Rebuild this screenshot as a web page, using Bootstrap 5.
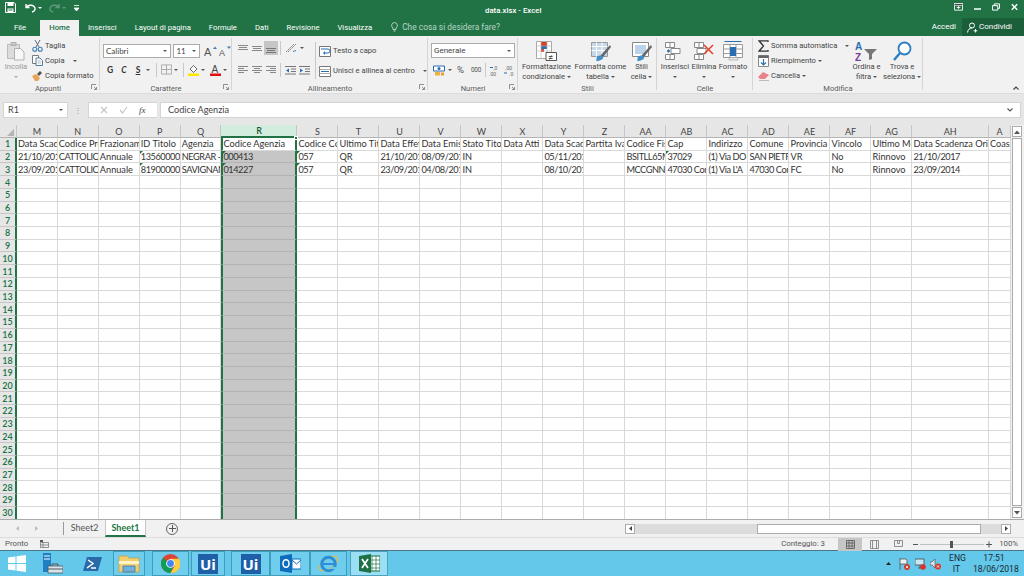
<!DOCTYPE html>
<html lang="it">
<head>
<meta charset="utf-8">
<title>data.xlsx - Excel</title>
<link href="https://cdn.jsdelivr.net/npm/bootstrap@5.3.0/dist/css/bootstrap.min.css" rel="stylesheet">
<style>
html,body{height:576px;overflow:hidden}
body{width:1024px;background:#f1f1f1;font-family:Roboto,"Open Sans",sans-serif;font-size:7.6px;color:#444;line-height:10px}
svg{display:block;flex:none}
.l1{margin-left:1px}.l2{margin-left:2px}.l3{margin-left:3px}.l4{margin-left:4px}.l5{margin-left:5px}.l6{margin-left:6px}.l7{margin-left:7px}.l8{margin-left:8px}.l9{margin-left:9px}.l11{margin-left:11px}
.w10{width:10px}.w14{width:14px}.w27{width:27px}.w28{width:28px}.w30{width:30px}.w31{width:31px}.w32{width:32px}.w33{width:33px}.w34{width:34px}.w37{width:37px}.w38{width:38px}.w39{width:39px}.w40{width:40px}.w41{width:41px}.w53{width:53px}.w55{width:55px}.w70{width:70px}.w84{width:84px}.w93{width:93px}
.xl-title{height:18px;background:#217346;color:#fff}
.xl-qat{width:485px;padding:2px 0 0 5px}
.xl-ttl{margin-top:6px;font-size:7.8px;font-weight:500}
.xl-win{padding:3px 6px 0 0;margin-left:auto}
.xl-tabs{height:18px;background:#217346;color:#fff;font-size:7.7px}
.xl-tab{padding:0 9px;height:16px;display:flex;align-items:center;margin-top:2px}
.xl-file{width:40px;justify-content:center;padding:0}
.xl-home{width:39px;justify-content:center;padding:0;background:#f1f1f1;color:#217346;font-weight:500}
.xl-tell{margin-left:10px;gap:4px;color:#b8d5c5;font-size:8.4px}
.xl-acc{font-size:8px}
.xl-share{width:62px;height:18px;background:#1b5e3a;gap:1px;padding-left:5px;margin-left:6px;font-size:8px}
.xl-ribbon{height:58px;background:#f1f1f1;border-bottom:1px solid #dcdcdc}
.xl-grp{display:flex;flex-direction:column;flex:none;padding-top:2px;position:relative}
.xl-grp::after{content:"";position:absolute;right:0;top:2px;bottom:3px;width:1px;background:#d4d4d4}
.xl-body{height:47px;display:flex}
.xl-lab{height:9px;text-align:center;line-height:9px;color:#5c5c5c}
.xl-launch{position:absolute;right:3px;bottom:3px;width:6px;height:6px}
.g-1{width:100px}.g-2{width:132px}.g-3{width:196px}.g-4{width:90px}.g-5{width:139px}.g-6{width:96px}.g-7{width:170px}
.xl-row{display:flex;align-items:center;white-space:nowrap}
.xl-sm{height:15px;gap:2px}
.xl-big{display:flex;flex-direction:column;align-items:center;text-align:center;white-space:nowrap;flex:none}
.xl-ic{height:24px;padding-top:3px;display:flex;justify-content:center}
.xl-dd{height:10px;display:flex;align-items:center}
.xl-drop{display:inline-block;width:0;height:0;border-top:2px solid #555;border-left:2px solid transparent;border-right:2px solid transparent;vertical-align:middle;flex:none}
.xl-dw{border-top-color:#fff}.xl-dg{border-top-color:#5c9a7a}.xl-dl{border-top-color:#aaa}
.xl-muted{color:#9a9a9a}
.xl-sel{height:14px;background:#fff;border:1px solid #ababab;display:flex;align-items:center;justify-content:space-between;padding:0 3px 0 2px;font-size:8px}
.xl-cal{font-family:Lato,sans-serif}
.xl-vs{width:1px;height:14px;background:#c8c8c8;flex:none}
.xl-on{background:#c6c6c6}
.xl-fbar{height:31px;background:#e6e6e6;padding:8px 0 7px 3px}
.xl-fbar>*{height:16px;background:#fff;border:1px solid #d4d4d4;display:flex;align-items:center;font-family:Lato,sans-serif}
.xl-fbox{width:65px;justify-content:space-between;padding:0 4px;font-size:9px}
.xl-fdots{width:20px;background:transparent!important;border:0!important;color:#9a9a9a;justify-content:center}
.xl-fx{width:69px;justify-content:space-around;padding:0 6px;margin-right:3px;border-right:0}
.xl-fxt{font:italic 9px "Liberation Serif",serif;color:#444}
.xl-inp{width:861px;font-size:9.1px;padding:0 7px;justify-content:space-between}
.xl-main{height:394px;background:#fff}
.xl-gridwrap{width:1011px;height:394px;overflow:hidden}
.xl-sheet{table-layout:fixed;width:1011px;border-collapse:separate;border-spacing:0;font-family:Lato,sans-serif;font-size:9.2px;color:#333}
.c-h{width:17px}.c-a{width:40.8px}.c-b{width:41px}.c-c{width:40.7px}.c-r{width:76px}.c-ah{width:76.5px}
.xl-sheet th,.xl-sheet td{height:12.72px;padding:0 0 0 1px;line-height:11px;border-right:1px solid #d9d9d9;border-bottom:1px solid #d9d9d9;overflow:hidden;white-space:nowrap;font-weight:400}
.xl-sheet td.xl-n{letter-spacing:-.45px}
.xl-sheet thead th{height:12px;background:#e6e6e6;text-align:center;color:#444;border-right-color:#c6c6c6;border-bottom-color:#b4b4b4;font-size:9px;padding:0}
.xl-sheet tbody th{background:#e6e6e6;text-align:center;color:#217346;border-right:2px solid #217346;border-bottom-color:#c6c6c6;padding:0;font-weight:600;font-size:9px}
.xl-sheet thead th.xl-c{background:#d2ecdd;color:#185c37;border-bottom:2px solid #217346;font-weight:600}
.xl-sheet td.xl-s{background:#c6c6c6;border-left:2px solid #217346;border-right:2px solid #217346;border-bottom-color:#b2b2b2;padding-left:0}
.xl-sheet td.xl-s1{background:#fff;position:relative;overflow:visible;border-bottom-color:#d9d9d9}
.xl-sheet td.xl-t{position:relative}
.xl-sheet td.xl-t::before{content:"";position:absolute;left:0;top:0;border-top:3px solid #217346;border-right:3px solid transparent}
.xl-handle{position:absolute;right:-3px;top:-2px;width:4px;height:4px;background:#217346;border:1px solid #fff}
.xl-corner{border-left:7px solid transparent;border-bottom:7px solid #b4b4b4;width:0;height:0;margin:3px 2px 0 auto}
.xl-vbar{width:13px;background:#f1f1f1;padding:1px 0 1px 1px}
.xl-sb{width:10px;height:11px;background:#fff;border:1px solid #ababab;display:flex;align-items:center;justify-content:center;flex:none}
.xl-vtrack{width:10px;flex:1;background:#fff;border:1px solid #ababab;margin:1px 0}
.xl-sheets{height:18px;background:#f1f1f1;border-top:1px solid #ababab;font-size:8.5px;color:#555}
.xl-nav{width:64px;gap:14px;padding-left:16px;border-right:1px solid #9a9a9a;height:13px}
.xl-stab{width:41px;height:17px;display:flex;align-items:center;justify-content:center;font-family:Lato,sans-serif;font-size:9px;margin-top:-1px}
.xl-act{background:#fff;color:#217346;font-weight:700;border-bottom:2px solid #217346;border-left:1px solid #c6c6c6;border-right:1px solid #c6c6c6;margin-bottom:-1px}
.xl-add{width:12px;height:12px;border:1px solid #666;border-radius:50%;margin-left:20px;display:flex;align-items:center;justify-content:center}
.xl-hbar{margin-left:auto;width:399px;padding-right:13px;height:16px}
.xl-hb{width:10px;height:10px;background:#fff;border:1px solid #ababab;display:flex;align-items:center;justify-content:center;flex:none}
.xl-htrack{flex:1;height:10px;background:#dcdcdc;padding-left:122px;padding-right:20px}
.xl-thumb{height:10px;background:#fff;border:1px solid #ababab}
.xl-status{height:13px;background:#f1f1f1;padding-left:5px;border-top:1px solid #dcdcdc;font-size:7.8px;color:#555}
.xl-pronto{width:35px}
.xl-cnt{margin-left:auto;margin-right:13px}
.xl-pct{width:24px;text-align:right;margin-right:6px}
.xl-view{width:24px;height:13px;display:flex;align-items:center;justify-content:center}
.xl-taskbar{height:26px;background:#63c8ea;border-top:1px solid #48788a;color:#1a2a33;font-size:8.6px;line-height:11px}
.xl-ti{height:25px;display:flex;align-items:center;justify-content:center;flex:none}
.xl-box{border:1px solid #3e9dbc;background:#6fcded}
.xl-on-task{background:#9adff5;border-color:#4aa2bf}
.xl-ui{width:20px;height:20px;background:#1f5fa8;color:#fff;font:700 15px/20px "Open Sans",sans-serif;text-align:center}
.xl-tray{margin-left:auto;gap:4.5px;padding-right:9px}
.xl-eng{margin-left:3.5px;text-align:center;width:15px}
.xl-clock{text-align:center;width:42px;margin-left:4.5px}
.xl-b{width:14px;text-align:center;font:700 8.5px Lato,sans-serif;color:#333}
.xl-i{font-style:italic}.xl-u{text-decoration:underline}
.r-2{margin-top:5px;height:13px}
.a-1{padding:6px 0 0 3px}
.a-l{padding:3px 0 0 4px;width:83px;flex:none}
.a-r{height:14px}.a-r2{height:14px;margin-top:8px}
.a-c{width:14px;display:flex;justify-content:center}
.a-on{height:14px;align-items:flex-end;padding-bottom:2px}
.a-v{margin:0 4px 0 2px}
.a-v2{height:37px;margin:4px 3px 0 0}
.a-t{padding-top:3px;flex:none}
.a-w{height:20px;gap:2px}
.n-b{padding:5px 3px 0 3px}
.n-s{height:15px}
.n-r{margin-top:5px;height:14px;padding-left:2px}
.n-p{margin-left:5px;font-size:9.5px;width:11px;color:#555}
.n-k{margin-left:3px;font-size:6.5px;letter-spacing:-.3px;color:#555}
.n-v{margin:0 3px 0 4px}
.b-2{padding-left:2px}.b-3{padding-left:3px}.b-5{padding-left:5px}
.xl-end{padding:0 5px 3px 0}
.xl-lp{padding-right:4px}
</style>
</head>
<body>
<!-- title bar -->
<div class="xl-title d-flex align-items-start">
  <div class="xl-qat d-flex align-items-center">
    <svg width="11" height="11" viewBox="0 0 11 11"><path d="M.5.5h8.5l1.500 1.500v8.500H.5z" fill="none" stroke="#fff"/><path d="M2.500 1h6v3h-6zM2.500 6.500h6V10h-6z" fill="#fff"/><path d="M3.500 7.500h4v1h-4z" fill="#217346"/></svg>
    <svg width="11" height="10" viewBox="0 0 11 10" class="l9"><path d="M1 1v3.500h3.500M1.500 4C3 2 7 1.500 9 3.500s1 5-2 5.500" fill="none" stroke="#fff" stroke-width="1.400"/></svg>
    <span class="xl-drop xl-dw l2"></span>
    <svg width="11" height="10" viewBox="0 0 11 10" class="l7"><path d="M10 1v3.500H6.500M9.500 4C8 2 4 1.500 2 3.500s-1 5 2 5.500" fill="none" stroke="#5c9a7a" stroke-width="1.400"/></svg>
    <span class="xl-drop xl-dg l2"></span>
    <svg width="5" height="6" viewBox="0 0 5 6" class="l8"><path d="M0 .5h5M0 3h5L2.500 6z" stroke="#fff" fill="#fff" stroke-width=".8"/></svg>
  </div>
  <div class="xl-ttl">data.xlsx - Excel</div>
  <div class="xl-win d-flex align-items-center">
    <svg width="9" height="8" viewBox="0 0 10 8"><path d="M.5.500h9v7h-9z" fill="none" stroke="#fff"/><path d="M0 0h10v2H0zM3 4.500h4M5 3v3" stroke="#fff"/></svg>
    <svg width="7" height="8" viewBox="0 0 7 8" class="l11"><path d="M0 6h7" stroke="#fff" stroke-width="1.500"/></svg>
    <svg width="8" height="8" viewBox="0 0 9 8" class="l11"><path d="M.5 2.500h6v5h-6zM2.500 2.500V.500h6v5h-2" fill="none" stroke="#fff" stroke-width="1.100"/></svg>
    <svg width="7" height="8" viewBox="0 0 9 9" class="l11"><path d="M1 1l7 7M8 1L1 8" stroke="#fff" stroke-width="1.800"/></svg>
  </div>
</div>
<!-- tabs -->
<div class="xl-tabs d-flex">
  <div class="xl-tab xl-file">File</div>
  <div class="xl-tab xl-home">Home</div>
  <div class="xl-tab">Inserisci</div>
  <div class="xl-tab">Layout di pagina</div>
  <div class="xl-tab">Formule</div>
  <div class="xl-tab">Dati</div>
  <div class="xl-tab">Revisione</div>
  <div class="xl-tab">Visualizza</div>
  <div class="d-flex align-items-center xl-tell">
    <svg width="7" height="10" viewBox="0 0 7 10"><path d="M3.500.500a3 3 0 0 1 1.500 5.500v1.500H2V6A3 3 0 0 1 3.500.500zM2.500 9h2" fill="none" stroke="#d5e6dc" stroke-width=".8"/></svg>
    <span>Che cosa si desidera fare?</span>
  </div>
  <div class="ms-auto d-flex align-items-center xl-acc">Accedi</div>
  <div class="xl-share d-flex align-items-center">
    <svg width="11" height="11" viewBox="0 0 11 11"><circle cx="5" cy="3.500" r="2.500" fill="none" stroke="#fff"/><path d="M.5 10.500c.5-3 2-4.500 4.500-4.500M8.500 7v3.500M6.700 8.800h3.600" fill="none" stroke="#fff"/></svg>
    <span>Condividi</span>
  </div>
</div>
<!-- ribbon -->
<div class="xl-ribbon d-flex">
  <!-- Appunti -->
  <div class="xl-grp g-1">
    <div class="xl-body">
      <div class="xl-big w32">
        <div class="xl-ic"><svg width="20" height="20" viewBox="0 0 20 20"><path d="M1.500 3.500h12v14h-12z" fill="#dcdcdc" stroke="#bcbcbc"/><path d="M5 1.500h5v3H5z" fill="#c8c8c8" stroke="#b0b0b0"/><path d="M8.500 7.500h6l3.500 3.500v8h-9.500z" fill="#f8f8f8" stroke="#b0b0b0"/></svg></div>
        <div class="xl-muted">Incolla</div>
        <div class="xl-dd"><span class="xl-drop xl-dl"></span></div>
      </div>
      <div>
        <div class="xl-row xl-sm"><svg width="11" height="12" viewBox="0 0 11 12"><path d="M3 0l4 7M8 0L4 7" stroke="#5a6a7a" fill="none"/><circle cx="2.800" cy="9.300" r="2" fill="none" stroke="#3f7fb5" stroke-width="1.100"/><circle cx="8.200" cy="9.300" r="2" fill="none" stroke="#3f7fb5" stroke-width="1.100"/></svg><span>Taglia</span></div>
        <div class="xl-row xl-sm"><svg width="11" height="11" viewBox="0 0 11 11"><path d="M.5.500h6v8h-6z" fill="#fff" stroke="#7a7a7a"/><path d="M4 3h4l2.500 2.500V10.500H4z" fill="#fff" stroke="#4a7fae"/><path d="M5.500 6h3.500M5.500 8h3.500" stroke="#999" stroke-width=".7"/></svg><span>Copia</span><span class="xl-drop l6"></span></div>
        <div class="xl-row xl-sm"><svg width="11" height="11" viewBox="0 0 11 11"><path d="M0 6l4-2 4 4-2 3H3z" fill="#e8a55a"/><path d="M5 4l3-3 2 2-3 3z" fill="#555"/></svg><span>Copia formato</span></div>
      </div>
    </div>
    <div class="xl-lab xl-lp">Appunti</div>
    <svg class="xl-launch" viewBox="0 0 6 6"><path d="M.5 5V.500H5M3 3l2.500 2.500M5.500 3v2.500H3" fill="none" stroke="#777" stroke-width=".8"/></svg>
  </div>
  <!-- Carattere -->
  <div class="xl-grp g-2">
    <div class="xl-body flex-column a-1">
      <div class="xl-row">
        <div class="xl-sel w70"><span class="xl-cal">Calibri</span><span class="xl-drop"></span></div>
        <div class="xl-sel w27 l2"><span class="xl-cal">11</span><span class="xl-drop"></span></div>
        <svg width="13" height="11" viewBox="0 0 13 11" class="l4"><text x="0" y="10" font-size="11" font-family="Liberation Sans" fill="#555">A</text><path d="M9 3l2-2.500L13 3z" fill="#3f7fb5"/></svg>
        <svg width="13" height="11" viewBox="0 0 13 11" class="l2"><text x="0" y="10" font-size="9" font-family="Liberation Sans" fill="#555">A</text><path d="M8 .500l2 2.500 2-2.500z" fill="#3f7fb5"/></svg>
      </div>
      <div class="xl-row r-2">
        <b class="xl-b">G</b>
        <b class="xl-b xl-i">C</b>
        <b class="xl-b xl-u">S</b>
        <span class="xl-drop l1"></span>
        <span class="xl-vs l6"></span>
        <svg width="11" height="11" viewBox="0 0 12 11" class="l4"><path d="M.5.500h11v10H.500zM6 .5v10M.5 5.500h11" fill="none" stroke="#a8a8a8"/></svg>
        <span class="xl-drop l2"></span>
        <span class="xl-vs l5"></span>
        <svg width="11" height="12" viewBox="0 0 11 12" class="l4"><path d="M2 5l3.500-3.500L9 5 5.500 8.500z" fill="#fff" stroke="#666"/><path d="M0 9.500h11V12H0z" fill="#ffe600"/></svg>
        <span class="xl-drop l2"></span>
        <svg width="11" height="12" viewBox="0 0 11 12" class="l5"><text x="1.500" y="9" font-size="10" font-family="Liberation Sans" fill="#444">A</text><path d="M0 9.500h11V12H0z" fill="#e01010"/></svg>
        <span class="xl-drop l2"></span>
      </div>
    </div>
    <div class="xl-lab">Carattere</div>
    <svg class="xl-launch" viewBox="0 0 6 6"><path d="M.5 5V.500H5M3 3l2.500 2.500M5.500 3v2.500H3" fill="none" stroke="#777" stroke-width=".8"/></svg>
  </div>
  <!-- Allineamento -->
  <div class="xl-grp g-3">
    <div class="xl-body">
      <div class="a-l">
        <div class="xl-row a-r">
          <div class="a-c"><svg width="10" height="7" viewBox="0 0 10 7"><path d="M0 .5h10M1 2.500h8M0 4.500h10" stroke="#888"/></svg></div>
          <div class="a-c"><svg width="10" height="7" viewBox="0 0 10 7"><path d="M0 1.500h10M1 3.500h8M0 5.500h10" stroke="#888"/></svg></div>
          <div class="a-c a-on xl-on"><svg width="10" height="7" viewBox="0 0 10 7"><path d="M0 2.500h10M1 4.500h8M0 6.500h10" stroke="#777"/></svg></div>
          <span class="xl-vs a-v"></span>
          <svg width="12" height="10" viewBox="0 0 12 10"><path d="M1 9l8-8M3 9l8-8" stroke="#777" stroke-dasharray="2 1"/><path d="M8 8.500l3-1" stroke="#3f7fb5"/></svg>
          <span class="xl-drop l3"></span>
        </div>
        <div class="xl-row a-r2">
          <div class="a-c"><svg width="10" height="8" viewBox="0 0 10 8"><path d="M0 .5h10M0 2.500h6M0 4.500h10M0 6.500h6" stroke="#888"/></svg></div>
          <div class="a-c"><svg width="10" height="8" viewBox="0 0 10 8"><path d="M0 .5h10M2 2.500h6M0 4.500h10M2 6.500h6" stroke="#888"/></svg></div>
          <div class="a-c"><svg width="10" height="8" viewBox="0 0 10 8"><path d="M0 .5h10M4 2.500h6M0 4.500h10M4 6.500h6" stroke="#888"/></svg></div>
          <span class="xl-vs a-v"></span>
          <svg width="11" height="9" viewBox="0 0 11 9"><path d="M0 .5h11M6 3h5M6 5.500h5M0 8h11" stroke="#777"/><path d="M4 2.500L1 4.500l3 2z" fill="#2a6db0"/></svg>
          <svg width="11" height="9" viewBox="0 0 11 9" class="l3"><path d="M0 .5h11M6 3h5M6 5.500h5M0 8h11" stroke="#777"/><path d="M1 2.500l3 2-3 2z" fill="#2a6db0"/></svg>
        </div>
      </div>
      <div class="xl-vs a-v2"></div>
      <div class="a-t">
        <div class="xl-row a-w"><svg width="12" height="11" viewBox="0 0 12 11"><path d="M.5.500h11v10H.500z" fill="#fff" stroke="#777"/><path d="M2 3h7a1.500 1.500 0 0 1 0 4H5" fill="none" stroke="#2a6db0"/><path d="M6 5L4 7l2 2z" fill="#2a6db0"/></svg><span>Testo a capo</span></div>
        <div class="xl-row a-w"><svg width="12" height="11" viewBox="0 0 12 11"><path d="M.5.500h11v10H.500z" fill="#fff" stroke="#777"/><path d="M.5 3.500h11M.5 7.500h11" stroke="#aaa"/><path d="M2 5.500h8" stroke="#2a6db0"/></svg><span>Unisci e allinea al centro</span><span class="xl-drop l6"></span></div>
      </div>
    </div>
    <div class="xl-lab">Allineamento</div>
    <svg class="xl-launch" viewBox="0 0 6 6"><path d="M.5 5V.500H5M3 3l2.500 2.500M5.500 3v2.500H3" fill="none" stroke="#777" stroke-width=".8"/></svg>
  </div>
  <!-- Numeri -->
  <div class="xl-grp g-4">
    <div class="xl-body flex-column n-b">
      <div class="xl-sel n-s w84"><span>Generale</span><span class="xl-drop"></span></div>
      <div class="xl-row n-r">
        <svg width="12" height="11" viewBox="0 0 12 11"><path d="M.5 1h11v5H.500z" fill="#fff" stroke="#2a6db0"/><circle cx="6" cy="3.500" r="1.500" fill="#2a6db0"/><path d="M2 7h5v3.500H2z" fill="#f0b040"/><path d="M8 7.500h3v3H8z" fill="#e8a030"/></svg>
        <span class="xl-drop l3"></span>
        <span class="n-p">%</span>
        <span class="n-k">000</span>
        <span class="xl-vs n-v"></span>
        <svg width="11" height="11" viewBox="0 0 11 11"><text x="4" y="5" font-size="5" font-family="Liberation Sans" fill="#555">,0</text><text x="0" y="10.500" font-size="5" font-family="Liberation Sans" fill="#555">,00</text><path d="M1 2.500h3" stroke="#2a6db0"/></svg>
        <svg width="11" height="11" viewBox="0 0 11 11" class="l4"><text x="1" y="5" font-size="5" font-family="Liberation Sans" fill="#555">,00</text><text x="5" y="10.500" font-size="5" font-family="Liberation Sans" fill="#555">,0</text><path d="M0 8h3" stroke="#2a6db0"/></svg>
      </div>
    </div>
    <div class="xl-lab">Numeri</div>
    <svg class="xl-launch" viewBox="0 0 6 6"><path d="M.5 5V.500H5M3 3l2.500 2.500M5.500 3v2.500H3" fill="none" stroke="#777" stroke-width=".8"/></svg>
  </div>
  <!-- Stili -->
  <div class="xl-grp g-5">
    <div class="xl-body b-2">
      <div class="xl-big w53">
        <div class="xl-ic"><svg width="21" height="21" viewBox="0 0 21 21"><path d="M.5.500h15v17H.5z" fill="#fff" stroke="#aaa"/><path d="M5 1h6v4H5z" fill="#d9402a"/><path d="M5 5h6v3H5z" fill="#2a6db0"/><path d="M5 8h3v3H5z" fill="#d9402a"/><path d="M.5 5h15M.5 10h15M5 .5v17M11 .5v17" stroke="#bbb" fill="none" stroke-width=".6"/><path d="M10 11.500h10.500v8H10z" fill="#fff" stroke="#555"/><text x="12.500" y="18.500" font-size="8" fill="#333" font-family="Liberation Sans">≠</text></svg></div>
        <div>Formattazione</div>
        <div>condizionale <span class="xl-drop"></span></div>
      </div>
      <div class="xl-big w55">
        <div class="xl-ic"><svg width="20" height="21" viewBox="0 0 20 21"><path d="M.5 1.500h16v14H.500z" fill="#c6d8ea" stroke="#999"/><path d="M.5 5.500h16M.5 9.500h16M5.500 1.500v14M11 1.500v14" stroke="#fff"/><path d="M19 4L10 14l-1 3 3-1 8-10z" fill="#666"/><path d="M6 16c2-2 5-2 6 0s-3 4-7 4c1-1 0-2 1-4z" fill="#3f8fc8"/></svg></div>
        <div>Formatta come</div>
        <div>tabella <span class="xl-drop"></span></div>
      </div>
      <div class="xl-big w27">
        <div class="xl-ic"><svg width="20" height="21" viewBox="0 0 20 21"><path d="M.5 1.500h16v14H.500z" fill="#fff" stroke="#888"/><path d="M3 4h11v9H3z" fill="#bcd2e8"/><path d="M19 4L10 14l-1 3 3-1 8-10z" fill="#666"/><path d="M6 16c2-2 5-2 6 0s-3 4-7 4c1-1 0-2 1-4z" fill="#3f8fc8"/></svg></div>
        <div>Stili</div>
        <div>cella <span class="xl-drop"></span></div>
      </div>
    </div>
    <div class="xl-lab">Stili</div>
  </div>
  <!-- Celle -->
  <div class="xl-grp g-6">
    <div class="xl-body b-3">
      <div class="xl-big w30">
        <div class="xl-ic"><svg width="20" height="20" viewBox="0 0 20 20"><path d="M.5 1.500h9v5h-9zM6 7.500h9v5H6zM.5 13.500h9v5h-9zM5 1.500v5M5 13.500v5" fill="#fff" stroke="#888"/><path d="M2 10h3M3.500 8.500v3" stroke="#2a6db0" stroke-width="1.400"/></svg></div>
        <div>Inserisci</div>
        <div class="xl-dd"><span class="xl-drop"></span></div>
      </div>
      <div class="xl-big w28">
        <div class="xl-ic"><svg width="20" height="20" viewBox="0 0 20 20"><path d="M.5 1.500h9v5h-9zM3 7.500h9v5H3zM.5 13.500h9v5h-9zM5 1.500v5M5 13.500v5" fill="#fff" stroke="#888"/><path d="M10 4l9 9M19 4l-9 9" stroke="#e0402a" stroke-width="1.500"/></svg></div>
        <div>Elimina</div>
        <div class="xl-dd"><span class="xl-drop"></span></div>
      </div>
      <div class="xl-big w30">
        <div class="xl-ic"><svg width="20" height="20" viewBox="0 0 20 20"><path d="M1.500 .5h17" stroke="#2a6db0"/><path d="M.5 3.500h19v13H.500zM7 3.500v13M13 3.500v13M.5 8h19M.5 12.500h19" fill="#fff" stroke="#999"/><path d="M7 6h6v9H7z" fill="#2a6db0"/><path d="M6 16.500h9v2.500H6z" fill="#e8e8e8" stroke="#999" stroke-width=".6"/></svg></div>
        <div>Formato</div>
        <div class="xl-dd"><span class="xl-drop"></span></div>
      </div>
    </div>
    <div class="xl-lab">Celle</div>
  </div>
  <!-- Modifica -->
  <div class="xl-grp g-7">
    <div class="xl-body b-5">
      <div class="w93 flex-none">
        <div class="xl-row xl-sm"><svg width="11" height="12" viewBox="0 0 11 12"><path d="M10 2V.800H1l4.500 5.200L1 11.200h9V10" fill="none" stroke="#333" stroke-width="1.300"/></svg><span>Somma automatica</span><span class="xl-drop l6"></span></div>
        <div class="xl-row xl-sm"><svg width="11" height="12" viewBox="0 0 11 12"><path d="M.5.500h10v11H.500z" fill="#fff" stroke="#888"/><path d="M.5.500h10V3H.500z" fill="#666"/><path d="M5.500 4v6M3 7.500l2.500 2.500L8 7.500" fill="none" stroke="#2a6db0" stroke-width="1.200"/></svg><span>Riempimento</span><span class="xl-drop"></span></div>
        <div class="xl-row xl-sm"><svg width="11" height="10" viewBox="0 0 11 10"><path d="M0 6l5-5 6 3-4 4H2z" fill="#e8828c"/><path d="M1 9.500h10" stroke="#bbb"/></svg><span>Cancella</span><span class="xl-drop"></span></div>
      </div>
      <div class="xl-big w31">
        <div class="xl-ic"><svg width="23" height="21" viewBox="0 0 23 21"><text x="0" y="9" font-size="10" font-weight="700" font-family="Liberation Sans" fill="#2a6db0">A</text><text x="0" y="20" font-size="10" font-weight="700" font-family="Liberation Sans" fill="#7a3f9d">Z</text><path d="M9 8h13l-5 5v5l-3 1v-6z" fill="#777"/></svg></div>
        <div>Ordina e</div>
        <div>filtra <span class="xl-drop"></span></div>
      </div>
      <div class="xl-big w40">
        <div class="xl-ic"><svg width="19" height="21" viewBox="0 0 19 21"><circle cx="11.500" cy="7.500" r="6" fill="#fff" stroke="#2a7fc4" stroke-width="1.800"/><path d="M7 12l-6 7" stroke="#2a7fc4" stroke-width="2.400"/></svg></div>
        <div>Trova e</div>
        <div>seleziona <span class="xl-drop"></span></div>
      </div>
    </div>
    <div class="xl-lab">Modifica</div>
  </div>
  <div class="flex-grow-1 d-flex justify-content-end align-items-end xl-end">
    <svg width="6" height="4" viewBox="0 0 6 4"><path d="M.5 3.500L3 1l2.500 2.500" fill="none" stroke="#444" stroke-width="1.200"/></svg>
  </div>
</div>
<!-- formula bar -->
<div class="xl-fbar d-flex">
  <div class="xl-fbox"><span>R1</span><span class="xl-drop"></span></div>
  <div class="xl-fdots">⋮</div>
  <div class="xl-fx">
    <svg width="8" height="8" viewBox="0 0 8 8"><path d="M1 1l6 6M7 1L1 7" stroke="#c6c6c6" stroke-width="1.200"/></svg>
    <svg width="9" height="8" viewBox="0 0 9 8"><path d="M1 4l2.500 3L8 1" fill="none" stroke="#c6c6c6" stroke-width="1.200"/></svg>
    <span class="xl-fxt">fx</span>
  </div>
  <div class="xl-inp"><span>Codice Agenzia</span><svg width="6" height="4" viewBox="0 0 6 4"><path d="M.5.500L3 3 5.500.500" fill="none" stroke="#555" stroke-width="1.100"/></svg></div>
</div>
<!-- sheet -->
<div class="xl-main d-flex">
  <div class="xl-gridwrap">
    <table class="xl-sheet" id="xlgrid">
      <colgroup>
        <col class="c-h"><col class="c-a"><col class="c-b"><col class="c-b"><col class="c-b"><col class="c-c"><col class="c-r"><col class="c-b"><col class="c-b"><col class="c-b"><col class="c-b"><col class="c-b"><col class="c-b"><col class="c-b"><col class="c-b"><col class="c-b"><col class="c-b"><col class="c-b"><col class="c-b"><col class="c-b"><col class="c-b"><col class="c-b"><col class="c-ah"><col>
      </colgroup>
      <thead>
        <tr><th><div class="xl-corner"></div></th><th>M</th><th>N</th><th>O</th><th>P</th><th>Q</th><th class="xl-c">R</th><th>S</th><th>T</th><th>U</th><th>V</th><th>W</th><th>X</th><th>Y</th><th>Z</th><th>AA</th><th>AB</th><th>AC</th><th>AD</th><th>AE</th><th>AF</th><th>AG</th><th>AH</th><th>A</th></tr>
      </thead>
      <tbody>
        <tr><th>1</th><td>Data Scade</td><td>Codice Pro</td><td>Frazionam</td><td>ID Titolo</td><td>Agenzia</td><td class="xl-s xl-s1">Codice Agenzia<span class="xl-handle"></span></td><td>Codice Co</td><td>Ultimo Tit</td><td>Data Effet</td><td>Data Emis</td><td>Stato Titol</td><td>Data Atti L</td><td>Data Scade</td><td>Partita Iva</td><td>Codice Fis</td><td>Cap</td><td>Indirizzo</td><td>Comune</td><td>Provincia</td><td>Vincolo</td><td>Ultimo Mo</td><td>Data Scadenza Orig</td><td>Coass</td></tr>
        <tr><th>2</th><td class="xl-n">21/10/2017</td><td class="xl-n">CATTOLICA</td><td>Annuale</td><td class="xl-t xl-n">135600000</td><td class="xl-n">NEGRAR - </td><td class="xl-s xl-t xl-n">000413</td><td class="xl-t xl-n">057</td><td>QR</td><td class="xl-n">21/10/2017</td><td class="xl-n">08/09/2017</td><td>IN</td><td></td><td class="xl-n">05/11/2017</td><td></td><td class="xl-n">BSITLL65M</td><td class="xl-t xl-n">37029</td><td class="xl-n">(1) Via DO</td><td class="xl-n">SAN PIETR</td><td>VR</td><td>No</td><td>Rinnovo</td><td class="xl-n">21/10/2017</td><td></td></tr>
        <tr><th>3</th><td class="xl-n">23/09/2014</td><td class="xl-n">CATTOLICA</td><td>Annuale</td><td class="xl-t xl-n">819000000</td><td class="xl-n">SAVIGNAN</td><td class="xl-s xl-t xl-n">014227</td><td class="xl-t xl-n">057</td><td>QR</td><td class="xl-n">23/09/2014</td><td class="xl-n">04/08/2014</td><td>IN</td><td></td><td class="xl-n">08/10/2017</td><td></td><td class="xl-n">MCCGNN6</td><td class="xl-n">47030 Con</td><td class="xl-n">(1) Via L'A</td><td class="xl-n">47030 Con</td><td>FC</td><td>No</td><td>Rinnovo</td><td class="xl-n">23/09/2014</td><td></td></tr>
      </tbody>
    </table>
  </div>
  <div class="xl-vbar d-flex flex-column">
    <div class="xl-sb"><svg width="6" height="4" viewBox="0 0 6 4"><path d="M0 4l3-3.500L6 4z" fill="#555"/></svg></div>
    <div class="xl-vtrack"></div>
    <div class="xl-sb"><svg width="6" height="4" viewBox="0 0 6 4"><path d="M0 0l3 3.500L6 0z" fill="#555"/></svg></div>
  </div>
</div>
<!-- sheets -->
<div class="xl-sheets d-flex align-items-center">
  <div class="xl-nav d-flex align-items-center">
    <svg width="3" height="5" viewBox="0 0 3 5"><path d="M3 0L0 2.500 3 5z" fill="#bbb"/></svg>
    <svg width="3" height="5" viewBox="0 0 3 5" class="l2"><path d="M0 0l3 2.500L0 5z" fill="#bbb"/></svg>
  </div>
  <div class="xl-stab">Sheet2</div>
  <div class="xl-stab xl-act">Sheet1</div>
  <div class="xl-add"><svg width="7" height="7" viewBox="0 0 7 7"><path d="M3.500 0v7M0 3.500h7" stroke="#555"/></svg></div>
  <div class="xl-hbar d-flex align-items-center">
    <div class="xl-hb"><svg width="3" height="5" viewBox="0 0 3 5"><path d="M3 0L0 2.500 3 5z" fill="#444"/></svg></div>
    <div class="xl-htrack"><div class="xl-thumb"></div></div>
    <div class="xl-hb"><svg width="3" height="5" viewBox="0 0 3 5"><path d="M0 0l3 2.500L0 5z" fill="#444"/></svg></div>
  </div>
</div>
<!-- status -->
<div class="xl-status d-flex align-items-center">
  <span class="xl-pronto">Pronto</span>
  <svg width="9" height="8" viewBox="0 0 9 8"><path d="M.5 2.500h8v5h-8zM.5 5h8M3 2.500v5" fill="none" stroke="#777" stroke-width=".8"/><path d="M0 0h3v2H0z" fill="#555"/></svg>
  <span class="xl-cnt">Conteggio: 3</span>
  <div class="xl-view xl-on"><svg width="9" height="9" viewBox="0 0 9 9"><path d="M.5.500h8v8h-8zM3 .5v8M6 .5v8M.5 3h8M.5 6h8" fill="none" stroke="#555" stroke-width=".8"/></svg></div>
  <div class="xl-view"><svg width="9" height="9" viewBox="0 0 9 9"><path d="M.5.500h8v8h-8zM2.500 .5v8M6.500 .5v8" fill="none" stroke="#777" stroke-width=".8"/></svg></div>
  <div class="xl-view"><svg width="9" height="9" viewBox="0 0 9 9"><path d="M.5.500h8v6h-8zM3.500 .5v3h2v-3" fill="none" stroke="#777" stroke-width=".8"/></svg></div>
  <svg width="84" height="9" viewBox="0 0 84 9"><path d="M3 4.500h5M76 4.500h6M79 1.500v6" stroke="#555"/><path d="M10 4.500h64" stroke="#c0c0c0"/><path d="M40 1h3v7h-3z" fill="#555"/></svg>
  <span class="xl-pct">100%</span>
</div>
<!-- taskbar -->
<div class="xl-taskbar d-flex align-items-center">
  <div class="xl-ti w33"><svg width="18" height="17" viewBox="0 0 18 17"><path d="M0 2.500L7.500 1.400V8H0zM8.500 1.200L18 0v8H8.500zM0 9h7.500v6.600L0 14.500zM8.500 9H18v8l-9.500-1.300z" fill="#fff"/></svg></div>
  <div class="xl-ti w39"><svg width="21" height="21" viewBox="0 0 21 21"><path d="M1 0h8v19H1z" fill="#1f7fc4"/><path d="M2 3h6M2 6h6" stroke="#fff"/><path d="M6 13h15v7H6z" fill="#d8e4ec" stroke="#555" stroke-width=".8"/><path d="M10 13v-2h6v2M6 16h15" fill="none" stroke="#555"/></svg></div>
  <div class="xl-ti w41"><svg width="19" height="16" viewBox="0 0 19 16"><path d="M4 1h15l-4 14H0z" fill="#2a6aa8"/><path d="M5 4l5 3.500L4 12" fill="none" stroke="#fff" stroke-width="1.500"/><path d="M8 12h5" stroke="#fff" stroke-width="1.500"/></svg></div>
  <div class="xl-ti xl-box w32"><svg width="22" height="20" viewBox="0 0 22 20"><path d="M1 2h8l2 2h10v14H1z" fill="#f2cf6e" stroke="#c8a04a" stroke-width=".8"/><path d="M1 7h20v3H1z" fill="#fdf3c8"/><path d="M5 12h12v6H5z" fill="#6fb0dc" stroke="#3a78a8" stroke-width=".8"/></svg></div>
  <div class="xl-ti xl-box w37 l7"><svg width="19" height="19" viewBox="0 0 24 24"><circle cx="12" cy="12" r="12" fill="#db4437"/><path d="M12 24A12 12 0 0 1 1.600 18 12 12 0 0 1 3 4.500L7 9l5 3 5.500 0z" fill="#0f9d58"/><path d="M12 6h10.900A12 12 0 0 1 12 24l5.200-9z" fill="#ffcd40"/><circle cx="12" cy="12" r="5.500" fill="#fff"/><circle cx="12" cy="12" r="4.300" fill="#4285f4"/></svg></div>
  <div class="xl-ti xl-box w34 l2"><div class="xl-ui">Ui</div></div>
  <div class="xl-ti xl-box w39 l6"><div class="xl-ui">Ui</div></div>
  <div class="xl-ti xl-box w40"><svg width="21" height="19" viewBox="0 0 21 19"><path d="M0 2l12-2v19L0 17z" fill="#0f6cbd"/><path d="M12 5h9v10h-9z" fill="#fff" stroke="#0f6cbd"/><path d="M12 6l4.500 4L21 6" fill="none" stroke="#0f6cbd"/><ellipse cx="6" cy="9.500" rx="3" ry="3.800" fill="none" stroke="#fff" stroke-width="1.500"/></svg></div>
  <div class="xl-ti xl-box w37"><svg width="21" height="21" viewBox="0 0 21 21"><ellipse cx="10.500" cy="10.500" rx="10.500" ry="5" transform="rotate(-35 10.500 10.500)" fill="none" stroke="#f0b93a" stroke-width="1.100"/><circle cx="10.500" cy="11" r="6.800" fill="none" stroke="#2a8fd8" stroke-width="3"/><path d="M4.500 11h12" stroke="#2a8fd8" stroke-width="2"/><path d="M13 15h6" stroke="#63c8ea" stroke-width="2.200"/></svg></div>
  <div class="xl-ti xl-box xl-on-task w38 l3"><svg width="21" height="19" viewBox="0 0 21 19"><path d="M9 2h12v15H9z" fill="#fff" stroke="#1e7145"/><path d="M13 2v15M17 2v15M9 6h12M9 10h12M9 14h12" stroke="#1e7145" stroke-width=".7"/><path d="M0 2l12-2v19L0 17z" fill="#1e7145"/><path d="M3 5l6 9M9 5l-6 9" stroke="#fff" stroke-width="1.700"/></svg></div>
  <div class="xl-tray d-flex align-items-center">
    <svg width="5" height="3" viewBox="0 0 5 3" class="me-1"><path d="M0 3l2.500-3L5 3z" fill="#222"/></svg>
    <svg width="11" height="12" viewBox="0 0 11 12"><path d="M1 0v12M1 1h6l1 1v4H1" fill="#e8f0f4" stroke="#555" stroke-width=".8"/><circle cx="8" cy="9" r="3" fill="#d8342a"/><path d="M6.800 7.800l2.400 2.400M9.200 7.800l-2.400 2.400" stroke="#fff" stroke-width=".8"/></svg>
    <svg width="11" height="12" viewBox="0 0 11 12"><path d="M0 1h9v6H0zM3 10h4M5 7v3" fill="#c8e8f4" stroke="#444" stroke-width=".8"/><circle cx="8" cy="9" r="2.800" fill="#d8342a"/></svg>
    <svg width="11" height="12" viewBox="0 0 11 12"><path d="M0 4h2l3-3v9L2 7H0z" fill="#d8e8f0" stroke="#555" stroke-width=".7"/><circle cx="8" cy="8.500" r="3" fill="#d8342a"/><path d="M6.800 7.300l2.400 2.400M9.200 7.300l-2.400 2.400" stroke="#fff" stroke-width=".8"/></svg>
    <div class="xl-eng">ENG<br>IT</div>
    <div class="xl-clock">17:51<br>18/06/2018</div>
  </div>
</div>
<script src="https://cdn.jsdelivr.net/npm/bootstrap@5.3.0/dist/js/bootstrap.bundle.min.js"></script>
<script>
  var body=document.querySelector('#xlgrid tbody');
  for(var r=4;r<=30;r++){
    var tr=document.createElement('tr');
    var h=document.createElement('th');h.textContent=r;tr.appendChild(h);
    for(var c=0;c<23;c++){var td=document.createElement('td');if(c===5)td.className='xl-s';tr.appendChild(td);}
    body.appendChild(tr);
  }
</script>
</body>
</html>
